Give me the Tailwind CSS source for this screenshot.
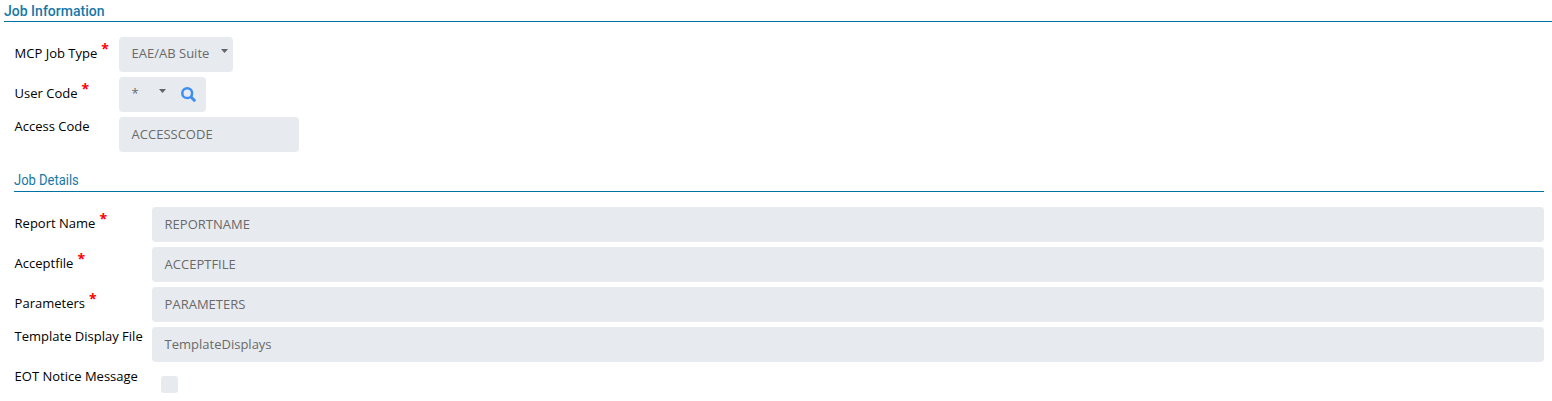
<!DOCTYPE html>
<html lang="en">
<head>
<meta charset="utf-8">
<title>Job Information</title>
<script src="https://cdn.jsdelivr.net/npm/@tailwindcss/browser@4"></script>
</head>
<body class="h-[401px] overflow-hidden bg-white font-['Open_Sans',sans-serif] text-[13px] leading-[18px] text-black">
<main class="pl-1">
  <h1 class="flex h-[22px] items-start border-b border-[#0073a5] font-['Roboto',sans-serif] text-[15px] font-medium leading-[22px] text-[#1878a6]"><span class="inline-block origin-left scale-x-[0.935]">Job Information</span></h1>
  <section class="mt-[15px] flex flex-col gap-[5px] pl-[10px]">
    <div class="flex h-[35px]">
      <div class="flex w-[105px] shrink-0 gap-1 pl-[0.6px] pt-[7px]"><label>MCP Job Type</label><b class="-mt-1 text-[14px] leading-[18px] text-[#ff0000]">*</b></div>
      <div class="flex w-[114px] justify-between rounded bg-[#e7eaef] pl-[12.6px] pr-[5px] pt-[7px] text-[#6a6a6a]"><span>EAE/AB Suite</span><svg class="mt-[5px] h-1 w-[7px]" viewBox="0 0 7 4"><path d="M0 0h7L3.5 4z" fill="#626467"/></svg></div>
    </div>
    <div class="flex h-[35px]">
      <div class="flex w-[105px] shrink-0 gap-1 pl-[0.6px] pt-[7px]"><label>User Code</label><b class="-mt-1 text-[14px] leading-[18px] text-[#ff0000]">*</b></div>
      <div class="flex w-[87px] rounded bg-[#e7eaef] pl-[12.6px] pt-[7px] text-[#6a6a6a]"><span class="w-[27.4px]">*</span><svg class="mt-[5px] h-1 w-[7px]" viewBox="0 0 7 4"><path d="M0 0h7L3.5 4z" fill="#626467"/></svg><svg class="ml-[15px] mt-[3px] size-[15px]" viewBox="0 0 15 15" fill="none" stroke="#3c8ff2"><circle cx="6.2" cy="6.2" r="4.9" stroke-width="2.5"/><path d="M9.8 9.8l4.4 4.4" stroke-width="3"/></svg></div>
    </div>
    <div class="flex h-[35px]">
      <label class="w-[105px] shrink-0 pl-[0.6px]">Access Code</label>
      <div class="flex w-[180px] rounded bg-[#e7eaef] pl-[12.6px] pt-2 text-[#6a6a6a]">ACCESSCODE</div>
    </div>
  </section>
  <section class="ml-[10px] mr-2 mt-[17px]">
    <h2 class="flex h-[23px] items-start border-b border-[#0073a5] font-['Roboto',sans-serif] text-[15px] leading-[22px] text-[#1878a6]"><span class="inline-block origin-left scale-x-[0.865]">Job Details</span></h2>
    <div class="mt-[15px] flex flex-col gap-[5px]">
      <div class="flex h-[35px]">
        <div class="flex w-[138px] shrink-0 gap-1 pl-[0.6px] pt-[7px]"><label>Report Name</label><b class="-mt-1 text-[14px] leading-[18px] text-[#ff0000]">*</b></div>
        <div class="flex grow rounded bg-[#e7eaef] pl-[12.6px] pt-2 text-[#6a6a6a]">REPORTNAME</div>
      </div>
      <div class="flex h-[35px]">
        <div class="flex w-[138px] shrink-0 gap-1 pl-[0.6px] pt-[7px]"><label>Acceptfile</label><b class="-mt-1 text-[14px] leading-[18px] text-[#ff0000]">*</b></div>
        <div class="flex grow rounded bg-[#e7eaef] pl-[12.6px] pt-2 text-[#6a6a6a]">ACCEPTFILE</div>
      </div>
      <div class="flex h-[35px]">
        <div class="flex w-[138px] shrink-0 gap-1 pl-[0.6px] pt-[7px]"><label>Parameters</label><b class="-mt-1 text-[14px] leading-[18px] text-[#ff0000]">*</b></div>
        <div class="flex grow rounded bg-[#e7eaef] pl-[12.6px] pt-2 text-[#6a6a6a]">PARAMETERS</div>
      </div>
      <div class="flex h-[35px]">
        <label class="w-[138px] shrink-0 pl-[0.6px]">Template Display File</label>
        <div class="flex grow rounded bg-[#e7eaef] pl-[12.6px] pt-2 text-[#6a6a6a]">TemplateDisplays</div>
      </div>
      <div class="flex h-[34px]">
        <label class="w-[138px] shrink-0 pl-[0.6px]">EOT Notice Message</label>
        <span class="ml-[9px] mt-[9px] size-[17px] rounded-[3px] bg-[#e7eaef]"></span>
      </div>
    </div>
  </section>
</main>
</body>
</html>
